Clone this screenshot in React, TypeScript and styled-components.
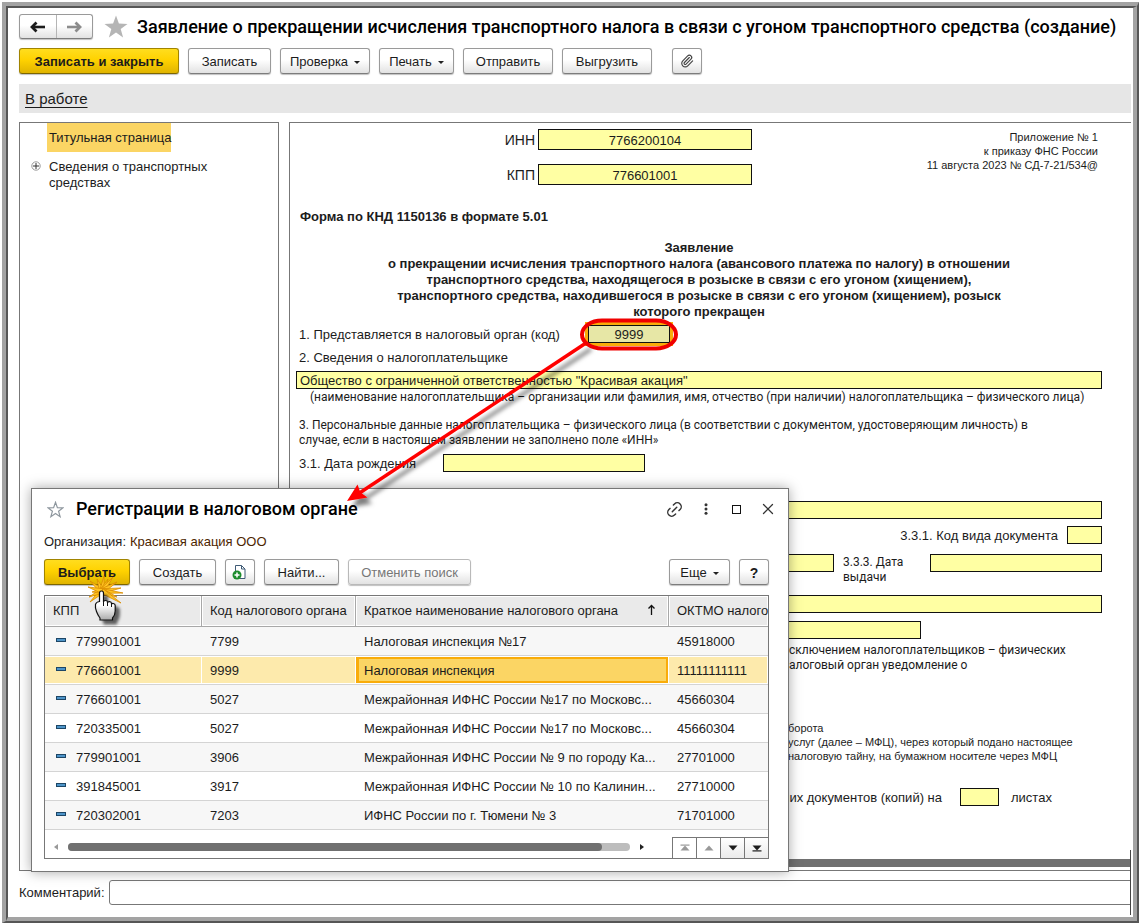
import React from "react";
import styled, { createGlobalStyle, css } from "styled-components";
import { Link2, Paperclip, X } from "lucide-react";

const sans = `"Liberation Sans", Arial, sans-serif`;
const roboto = `Roboto, "Liberation Sans", sans-serif`;

const GlobalStyle = createGlobalStyle`
  *, *::before, *::after { box-sizing: border-box; }
  body { margin: 0; background: #fff; color: #1c1c1c; font: 13px/16px ${sans}; }
  button, input { font: inherit; color: inherit; }
  h1, h2, p, ul { margin: 0; padding: 0; }
`;

/* ---------- outer frame ---------- */

const Page = styled.div`
  position: relative;
  display: flex;
  min-height: 100vh;
  padding: 2px 0 0 2px;
  overflow: hidden;
`;

const FrameOuter = styled.div`
  display: flex;
  flex: 1;
  min-width: 0;
  border: solid;
  border-width: 4px 2px 2px 4px;
  border-color: #a3a3a3 #565656 #565656 #a3a3a3;
`;

const FrameInner = styled.div`
  display: flex;
  flex-direction: column;
  flex: 1;
  min-width: 0;
  padding: 6px 2px 12px 11px;
  border: solid;
  border-width: 2px 4px 4px 2px;
  border-color: #565656 #a3a3a3 #a3a3a3 #565656;
`;

/* ---------- buttons ---------- */

const buttonSkin = css`
  border: 1px solid #9a9a9a;
  border-bottom-color: #7c7c7c;
  border-radius: 3px;
  background: linear-gradient(#fff 0%, #fff 45%, #e2e2e2 100%);
  box-shadow: 0 1px 1px rgba(0, 0, 0, 0.25);
`;

const Button = styled.button<{ $width: number; $primary?: boolean }>`
  display: flex;
  align-items: center;
  justify-content: center;
  gap: 6px;
  flex: none;
  width: ${(p) => p.$width}px;
  height: 26px;
  padding: 2px 0 0;
  white-space: nowrap;
  ${buttonSkin}
  ${(p) =>
    p.$primary &&
    css`
      border-color: #a18400;
      border-bottom-color: #7d6600;
      background: linear-gradient(#ffdd1f 0%, #ffd200 45%, #e0b400 100%);
      font-weight: bold;
    `}
  &:disabled {
    color: #777;
    border-color: #b9b9b9;
  }
`;

const IconButton = styled(Button)`
  padding: 0;
`;

const Caret = styled.span`
  border: 3px solid transparent;
  border-top-color: #222;
  border-bottom: 0;
`;

/* ---------- main window header ---------- */

const TitleRow = styled.header`
  display: flex;
  align-items: center;
  height: 25px;
`;

const NavButtons = styled.div`
  display: flex;
  width: 74px;
  height: 25px;
  margin-right: 11px;
  ${buttonSkin}
`;

const NavButton = styled.button`
  display: flex;
  align-items: center;
  justify-content: center;
  flex: 1;
  padding: 0;
  border: 0;
  background: none;
  color: #1c1c1c;
  & + & {
    border-left: 1px solid #b5b5b5;
    color: #8c8c8c;
  }
`;

const StarButton = styled.button`
  display: flex;
  flex: none;
  padding: 0;
  border: 0;
  background: none;
`;

const PageTitle = styled.h1`
  margin-left: 9px;
  overflow: hidden;
  color: #000;
  font: 500 18px/26px ${roboto};
  white-space: nowrap;
`;

const Toolbar = styled.div`
  display: flex;
  gap: 9px;
  margin-top: 9px;
`;

const ToolbarGap = styled.span<{ $grow?: boolean }>`
  width: 2px;
  flex: ${(p) => (p.$grow ? "1" : "none")};
`;

const StatusBar = styled.div`
  margin-top: 10px;
  padding: 6px;
  background: #e6e6e6;
  font-size: 15px;
  line-height: 17px;
`;

const StatusLink = styled.a`
  color: #1c1c1c;
  text-underline-offset: 3px;
`;

/* ---------- panels ---------- */

const Panels = styled.div`
  display: flex;
  flex: 1;
  gap: 10px;
  margin-top: 9px;
`;

const Sections = styled.nav`
  flex: none;
  width: 260px;
  border: 1px solid #777;
`;

const SectionList = styled.ul`
  list-style: none;
`;

const SectionItem = styled.li`
  display: flex;
  align-items: flex-start;
  padding-left: 11px;
  & + & {
    margin-top: 7px;
  }
`;

const Expander = styled.button`
  display: flex;
  width: 16px;
  padding: 2px 0 0;
  border: 0;
  background: none;
`;

const SectionLink = styled.a<{ $current?: boolean }>`
  max-width: 190px;
  padding: ${(p) => (p.$current ? "7px 0 6px 2px" : "0 2px")};
  background: ${(p) => (p.$current ? "#fbd564" : "none")};
  color: #1c1c1c;
  text-decoration: none;
`;

const Sheet = styled.form`
  display: flex;
  flex-direction: column;
  flex: 1;
  min-width: 0;
  padding: 6px 0 3px 6px;
  border: solid #777;
  border-width: 1px 0 1px 1px;
`;

const SheetBody = styled.div`
  padding-right: 29px;
`;

const Requisites = styled.div`
  display: grid;
  grid-template-columns: 239px 214px 1fr;
  grid-auto-rows: 21px;
  gap: 14px 3px;
  align-items: center;
`;

const RequisiteLabel = styled.label`
  font-size: 14px;
  text-align: right;
`;

const Appendix = styled.p`
  grid-area: 1 / 3 / 3 / 4;
  align-self: start;
  padding: 1px 4px 0 0;
  font-size: 11px;
  line-height: 14px;
  text-align: right;
`;

const Field = styled.input<{ $width?: number; $center?: boolean }>`
  display: block;
  height: 18px;
  min-width: 0;
  padding: 1px 3px 0;
  border: 1px solid #111;
  border-radius: 0;
  outline: 0;
  background: #ffffa3;
  text-align: ${(p) => (p.$center ? "center" : "left")};
  ${(p) => (p.$width ? `flex: none; width: ${p.$width}px;` : "flex: 1; width: 100%;")}
`;

const RequisiteField = styled(Field)`
  height: 21px;
`;

const ActiveField = styled(Field)`
  background: #e7e7a6;
  box-shadow: 0 0 0 3px #f9ac0a;
`;

const FormCode = styled.p`
  margin-top: 24px;
  padding-left: 4px;
  font-weight: bold;
`;

const FormTitle = styled.h2`
  margin-top: 15px;
  font: bold 13px/16px ${sans};
  text-align: center;
`;

const Row = styled.div<{ $top: number; $end?: boolean }>`
  display: flex;
  align-items: flex-start;
  justify-content: ${(p) => (p.$end ? "flex-end" : "flex-start")};
  gap: 9px;
  margin-top: ${(p) => p.$top}px;
`;

const RowLabel = styled.label<{ $width?: number }>`
  flex: none;
  width: ${(p) => (p.$width ? `${p.$width}px` : "auto")};
  padding: 2px 0 0 3px;
`;

const SheetsLabel = styled(RowLabel)`
  padding-right: 9px;
`;

const FieldCaption = styled.p`
  margin-top: 1px;
  padding-left: 14px;
  font: 12px/15px ${roboto};
`;

const Paragraph = styled.p<{ $top: number; $indent?: number; $small?: boolean }>`
  margin-top: ${(p) => p.$top}px;
  padding-left: ${(p) => p.$indent ?? 3}px;
  font: ${(p) => (p.$small ? `11px/14px ${sans}` : `12px/15px ${roboto}`)};
  white-space: nowrap;
`;

const TwoLineLabel = styled.label`
  flex: none;
  width: 78px;
  font: 12px/15px ${roboto};
  padding-top: 1px;
`;

const SheetScroll = styled.div`
  height: 8px;
  margin-top: auto;
  background: #707070;
`;

const CommentRow = styled.div`
  display: flex;
  align-items: center;
  gap: 4px;
  margin-top: 9px;
`;

const CommentField = styled.input`
  flex: 1;
  height: 25px;
  padding: 0 6px;
  border: 1px solid #777;
  border-radius: 3px 0 0 3px;
`;

/* ---------- dialog ---------- */

const Dialog = styled.section`
  position: absolute;
  top: 488px;
  left: 31px;
  width: 758px;
  padding: 0 19px 12px 12px;
  border: 1px solid #777;
  background: #fff;
  box-shadow: 0 0 12px rgba(0, 0, 0, 0.35);
`;

const DialogHeader = styled.header`
  display: flex;
  align-items: center;
  height: 40px;
  padding-left: 3px;
`;

const DialogTitle = styled.h2`
  flex: 1;
  margin-left: 12px;
  color: #000;
  font: 500 18px/24px ${roboto};
`;

const WindowButton = styled.button`
  display: flex;
  align-items: center;
  justify-content: center;
  width: 31px;
  height: 24px;
  padding: 0;
  border: 0;
  background: none;
  color: #333;
  &:last-child {
    margin-right: -14px;
  }
`;

const Organization = styled.p`
  margin-top: 5px;
`;

const OrganizationLink = styled.a`
  margin-left: 4px;
  color: #4d2600;
  text-decoration: none;
`;

const DialogToolbar = styled(Toolbar)`
  margin-top: 9px;
`;

const HelpMark = styled.b`
  font-size: 14px;
`;

const TableBox = styled.div`
  margin-top: 10px;
  border: 1px solid #777;
`;

const Table = styled.table`
  width: 100%;
  table-layout: fixed;
  border-collapse: separate;
  border-spacing: 0;
`;

const cell = css`
  overflow: hidden;
  text-align: left;
  white-space: nowrap;
`;

const HeadCell = styled.th<{ $width?: number }>`
  ${cell}
  width: ${(p) => (p.$width ? `${p.$width}px` : "auto")};
  height: 31px;
  padding: 0 0 0 8px;
  border: solid #a8a8a8;
  border-width: 0 1px 1px 0;
  background: #eaeaea;
  box-shadow: inset 0 0 0 1px #fff;
  font-weight: normal;
  &:last-child {
    border-right: 0;
  }
`;

const SortHead = styled.span`
  display: flex;
  justify-content: space-between;
  padding-right: 12px;
`;

const DataRow = styled.tr<{ $selected?: boolean }>`
  background: ${(p) => (p.$selected ? "#fdeaac" : "#fff")};
  &:nth-child(odd) {
    background: #f7f7f7;
  }
`;

const DataCell = styled.td<{ $selected?: boolean; $active?: boolean }>`
  ${cell}
  height: 29px;
  padding: 2px 8px 0;
  border-bottom: 1px solid #d4d4d4;
  ${(p) =>
    p.$selected &&
    css`
      box-shadow: inset -1px 0 #fff, inset 0 1px #fff, inset 0 -1px #fff;
    `}
  ${(p) =>
    p.$active &&
    css`
      background: #fbd564;
      box-shadow: inset -1px 0 #fff, inset 0 1px #fff, inset 0 -1px #fff, inset 0 0 0 3px #f9ac0a;
    `}
`;

const RecordMark = styled.span`
  display: inline-block;
  width: 10px;
  height: 4px;
  margin: 0 10px 4px 3px;
  border: 1px solid #1d4666;
  background: #4d94c9;
`;

const TableFooter = styled.div`
  display: flex;
  align-items: center;
  height: 28px;
  padding: 6px 0 0 9px;
`;

const ScrollArrow = styled.button<{ $side: "left" | "right" }>`
  width: 4px;
  height: 6px;
  padding: 0;
  border: solid transparent;
  border-width: 3px 0;
  background: none;
  ${(p) =>
    p.$side === "left"
      ? "border-right: 4px solid #999;"
      : "border-left: 4px solid #222;"}
`;

const ScrollTrack = styled.div`
  flex: 1;
  height: 8px;
  margin: 0 10px;
  border-radius: 4px;
  background: #bdbdbd;
`;

const ScrollThumb = styled.div`
  width: 95%;
  height: 8px;
  border-radius: 4px;
  background: #707070;
`;

const Pager = styled.div`
  display: flex;
  align-self: flex-end;
  margin: 0 -1px -1px 28px;
  border: solid #777;
  border-width: 1px 1px 1px 0;
`;

const PagerButton = styled.button`
  display: flex;
  align-items: center;
  justify-content: center;
  width: 24px;
  height: 20px;
  padding: 0;
  border: 0;
  border-left: 1px solid #777;
  background: linear-gradient(#fff, #ebebeb);
  color: #1c1c1c;
  &:disabled {
    background: #fff;
    color: #999;
  }
`;

/* ---------- callouts over the windows ---------- */

const Callout = styled.svg`
  position: absolute;
  top: 310px;
  left: 335px;
  pointer-events: none;
`;

const Pointer = styled.svg`
  position: absolute;
  top: 570px;
  left: 80px;
  pointer-events: none;
`;

const ClipEdge = styled.span`
  position: absolute;
  right: 8px;
  bottom: 8px;
  width: 1px;
  height: 65px;
  background: #444;
`;

const starPoints =
  "12,0.5 14.9,8.6 23.5,8.9 16.7,14.1 19.1,22.5 12,17.6 4.9,22.5 7.3,14.1 0.5,8.9 9.1,8.6";

const NavArrow = ({ flip }: { flip?: boolean }) => (
  <svg width="16" height="12" viewBox="0 0 16 12" aria-hidden>
    <g transform={flip ? "translate(16 0) scale(-1 1)" : undefined} fill="none" stroke="currentColor">
      <path d="M2 6H15" strokeWidth="2.6" />
      <path d="M6.5 1.5L2 6l4.500 4.500" strokeWidth="2.800" />
    </g>
  </svg>
);

const PagerIcon = ({ up, bar }: { up?: boolean; bar?: boolean }) => (
  <svg width="10" height="8" viewBox="0 0 10 8" fill="currentColor" aria-hidden>
    <g transform={up ? undefined : "translate(0 8) scale(1 -1)"}>
      <path d="M5 1.500L9.500 6.500H0.500Z" />
      {bar && <rect x="0.500" y="0.500" width="9" height="1.200" />}
    </g>
  </svg>
);

const columns = [
  { title: "КПП", width: 157 },
  { title: "Код налогового органа", width: 154 },
  { title: "Краткое наименование налогового органа", width: 313, sorted: true },
  { title: "ОКТМО налого" },
];

const records = [
  ["779901001", "7799", "Налоговая инспекция №17", "45918000"],
  ["776601001", "9999", "Налоговая инспекция", "11111111111"],
  ["776601001", "5027", "Межрайонная ИФНС России №17 по Московс...", "45660304"],
  ["720335001", "5027", "Межрайонная ИФНС России №17 по Московс...", "45660304"],
  ["779901001", "3906", "Межрайонная ИФНС России № 9 по городу Ка...", "27701000"],
  ["391845001", "3917", "Межрайонная ИФНС России № 10 по Калинин...", "27710000"],
  ["720302001", "7203", "ИФНС России по г. Тюмени № 3", "71701000"],
];
const selectedIndex = 1;

// Tips of the click burst around its centre
const burstCentre = [102, 591];
const rays = [
  [90, 581], [97, 579], [104, 576], [108, 579], [113, 577], [117, 582],
  [121, 588], [123, 593], [117, 597], [121, 603], [90, 602], [89, 597], [92, 592], [88, 587],
];

function RegistrationsDialog() {
  return (
    <Dialog role="dialog" aria-labelledby="dialog-title">
      <DialogHeader>
        <StarButton type="button" aria-label="Избранное">
          <svg width="17" height="17" viewBox="-1 -1 26 25">
            <polygon points={starPoints} fill="#fff" stroke="#8e979e" strokeWidth="1.800" />
          </svg>
        </StarButton>
        <DialogTitle id="dialog-title">Регистрации в налоговом органе</DialogTitle>
        <WindowButton type="button" aria-label="Ссылка">
          <Link2 size={19} strokeWidth={1.8} style={{ transform: "rotate(-45deg)" }} />
        </WindowButton>
        <WindowButton type="button" aria-label="Меню">
          <svg width="4" height="12" viewBox="0 0 4 12" fill="#333">
            <circle cx="2" cy="1.700" r="1.500" />
            <circle cx="2" cy="6" r="1.500" />
            <circle cx="2" cy="10.300" r="1.500" />
          </svg>
        </WindowButton>
        <WindowButton type="button" aria-label="Развернуть">
          <svg width="9" height="9" viewBox="0 0 9 9">
            <rect x="0.500" y="0.500" width="8" height="8" fill="none" stroke="#111" />
          </svg>
        </WindowButton>
        <WindowButton type="button" aria-label="Закрыть">
          <X size={18} strokeWidth={1.7} />
        </WindowButton>
      </DialogHeader>
      <Organization>
        Организация:
        <OrganizationLink href="#organization">Красивая акация ООО</OrganizationLink>
      </Organization>
      <DialogToolbar>
        <Button type="button" $width={86} $primary>Выбрать</Button>
        <Button type="button" $width={77}>Создать</Button>
        <IconButton type="button" $width={30} aria-label="Создать копированием">
          <svg width="16" height="16" viewBox="0 0 16 16">
            <path d="M3.500 7V1.500h6l3.500 3.500v9.500H8" fill="#fff" stroke="#3f5b76" />
            <path d="M9.500 1.500V5H13" fill="none" stroke="#3f5b76" />
            <circle cx="5" cy="11" r="4.500" fill="#1c8c2c" />
            <path d="M5 8.500v5M2.500 11h5" stroke="#fff" strokeWidth="1.500" />
          </svg>
        </IconButton>
        <Button type="button" $width={75}>Найти...</Button>
        <Button type="button" $width={123} disabled>Отменить поиск</Button>
        <ToolbarGap $grow />
        <Button type="button" $width={61}>Еще <Caret /></Button>
        <Button type="button" $width={30} aria-label="Справка"><HelpMark>?</HelpMark></Button>
      </DialogToolbar>
      <TableBox>
        <Table>
          <thead>
            <tr>
              {columns.map((c) => (
                <HeadCell key={c.title} $width={c.width}>
                  {c.sorted ? (
                    <SortHead>
                      {c.title}
                      <svg width="9" height="14" viewBox="0 0 9 14" aria-hidden>
                        <path d="M4.500 12V3M1.500 5.500l3-3 3 3" fill="none" stroke="#111" strokeWidth="1.300" />
                      </svg>
                    </SortHead>
                  ) : (
                    c.title
                  )}
                </HeadCell>
              ))}
            </tr>
          </thead>
          <tbody>
            {records.map((record, i) => (
              <DataRow key={i} $selected={i === selectedIndex}>
                {record.map((value, j) => (
                  <DataCell key={j} $selected={i === selectedIndex} $active={i === selectedIndex && j === 2}>
                    {j === 0 && <RecordMark />}
                    {value}
                  </DataCell>
                ))}
              </DataRow>
            ))}
          </tbody>
        </Table>
        <TableFooter>
          <ScrollArrow type="button" $side="left" aria-label="Влево" />
          <ScrollTrack>
            <ScrollThumb />
          </ScrollTrack>
          <ScrollArrow type="button" $side="right" aria-label="Вправо" />
          <Pager>
            <PagerButton type="button" disabled aria-label="В начало"><PagerIcon up bar /></PagerButton>
            <PagerButton type="button" disabled aria-label="Вверх"><PagerIcon up /></PagerButton>
            <PagerButton type="button" aria-label="Вниз"><PagerIcon /></PagerButton>
            <PagerButton type="button" aria-label="В конец"><PagerIcon bar /></PagerButton>
          </Pager>
        </TableFooter>
      </TableBox>
    </Dialog>
  );
}

function ApplicationForm() {
  return (
    <Sheet>
      <SheetBody>
        <Requisites>
          <RequisiteLabel htmlFor="inn">ИНН</RequisiteLabel>
          <RequisiteField id="inn" $center defaultValue="7766200104" />
          <RequisiteLabel htmlFor="kpp">КПП</RequisiteLabel>
          <RequisiteField id="kpp" $center defaultValue="776601001" />
          <Appendix>
            Приложение № 1<br />
            к приказу ФНС России<br />
            11 августа 2023 № СД-7-21/534@
          </Appendix>
        </Requisites>
        <FormCode>Форма по КНД 1150136 в формате 5.01</FormCode>
        <FormTitle>
          Заявление<br />
          о прекращении исчисления транспортного налога (авансового платежа по налогу) в отношении<br />
          транспортного средства, находящегося в розыске в связи с его угоном (хищением),<br />
          транспортного средства, находившегося в розыске в связи с его угоном (хищением), розыск<br />
          которого прекращен
        </FormTitle>
        <Row $top={5}>
          <RowLabel htmlFor="authority" $width={283}>1. Представляется в налоговый орган (код)</RowLabel>
          <ActiveField id="authority" $width={82} $center defaultValue="9999" />
        </Row>
        <Row $top={5}>
          <RowLabel htmlFor="taxpayer">2. Сведения о налогоплательщике</RowLabel>
        </Row>
        <Row $top={5}>
          <Field id="taxpayer" defaultValue={'Общество с ограниченной ответственностью "Красивая акация"'} />
        </Row>
        <FieldCaption>
          (наименование налогоплательщика – организации или фамилия, имя, отчество (при наличии) налогоплательщика – физического лица)
        </FieldCaption>
        <Paragraph $top={13}>
          3. Персональные данные налогоплательщика – физического лица (в соответствии с документом, удостоверяющим личность) в<br />
          случае, если в настоящем заявлении не заполнено поле «ИНН»
        </Paragraph>
        <Row $top={6}>
          <RowLabel htmlFor="birth" $width={138}>3.1. Дата рождения</RowLabel>
          <Field id="birth" $width={202} />
        </Row>
        <Row $top={29}>
          <Field aria-label="Место рождения" />
        </Row>
        <Row $top={7} $end>
          <RowLabel htmlFor="doc-kind">3.3.1. Код вида документа</RowLabel>
          <Field id="doc-kind" $width={35} />
        </Row>
        <Row $top={10}>
          <Field aria-label="Серия и номер" />
          <TwoLineLabel htmlFor="doc-date">3.3.3. Дата<br />выдачи</TwoLineLabel>
          <Field id="doc-date" $width={172} />
        </Row>
        <Row $top={10}>
          <Field aria-label="Кем выдан" />
        </Row>
        <Row $top={8}>
          <Field $width={625} aria-label="Код подразделения" />
        </Row>
        <Paragraph $top={4} $indent={486}>
          исключением налогоплательщиков – физических<br />
          налоговый орган уведомление о
        </Paragraph>
        <Paragraph $top={48} $indent={492} $small>
          борота<br />
          услуг (далее – МФЦ), через который подано настоящее<br />
          налоговую тайну, на бумажном носителе через МФЦ
        </Paragraph>
        <Row $top={25} $end>
          <SheetsLabel htmlFor="sheets">их документов (копий) на</SheetsLabel>
          <Field id="sheets" $width={39} />
          <RowLabel as="span" $width={94}>листах</RowLabel>
        </Row>
      </SheetBody>
      <SheetScroll />
    </Sheet>
  );
}

export default function App() {
  return (
    <Page>
      <GlobalStyle />
      <FrameOuter>
        <FrameInner>
          <TitleRow>
            <NavButtons>
              <NavButton type="button" aria-label="Назад"><NavArrow /></NavButton>
              <NavButton type="button" aria-label="Вперед"><NavArrow flip /></NavButton>
            </NavButtons>
            <StarButton type="button" aria-label="Избранное">
              <svg width="24" height="24" viewBox="0 0 24 24">
                <polygon points={starPoints} fill="#b5b5b5" />
              </svg>
            </StarButton>
            <PageTitle>
              Заявление о прекращении исчисления транспортного налога в связи с угоном транспортного средства (создание)
            </PageTitle>
          </TitleRow>
          <Toolbar>
            <Button type="button" $width={160} $primary>Записать и закрыть</Button>
            <Button type="button" $width={83}>Записать</Button>
            <Button type="button" $width={90}>Проверка <Caret /></Button>
            <Button type="button" $width={75}>Печать <Caret /></Button>
            <Button type="button" $width={90}>Отправить</Button>
            <Button type="button" $width={90}>Выгрузить</Button>
            <ToolbarGap />
            <IconButton type="button" $width={30} aria-label="Прикрепить">
              <Paperclip size={14} strokeWidth={2} color="#444" />
            </IconButton>
          </Toolbar>
          <StatusBar>
            <StatusLink href="#status">В работе</StatusLink>
          </StatusBar>
          <Panels>
            <Sections>
              <SectionList>
                <SectionItem>
                  <Expander as="span" />
                  <SectionLink href="#title-page" $current>Титульная страница</SectionLink>
                </SectionItem>
                <SectionItem>
                  <Expander type="button" aria-label="Раскрыть">
                    <svg width="10" height="10" viewBox="0 0 10 10">
                      <circle cx="5" cy="5" r="4.200" fill="#fff" stroke="#999" />
                      <path d="M5 2v6M2 5h6" stroke="#333" />
                    </svg>
                  </Expander>
                  <SectionLink href="#vehicles">Сведения о транспортных средствах</SectionLink>
                </SectionItem>
              </SectionList>
            </Sections>
            <ApplicationForm />
          </Panels>
          <CommentRow>
            <label htmlFor="comment">Комментарий:</label>
            <CommentField id="comment" />
          </CommentRow>
        </FrameInner>
      </FrameOuter>
      <ClipEdge />
      <RegistrationsDialog />
      <Callout width="360" height="210" viewBox="335 310 360 210" aria-hidden>
        <defs>
          <filter id="arrow-shadow" x="-20%" y="-20%" width="140%" height="140%">
            <feDropShadow dx="5" dy="6" stdDeviation="2" floodColor="#000" floodOpacity="0.5" />
          </filter>
        </defs>
        <g filter="url(#arrow-shadow)">
          <path d="M586 343L358 494" stroke="#f00" strokeWidth="3.500" />
          <path d="M347 501L357.500 484.500L360.500 492.500L367.500 497.500Z" fill="#f00" />
        </g>
        <rect x="582" y="320.500" width="94" height="28" rx="20" ry="14" fill="none" stroke="#f00000" strokeWidth="4" />
      </Callout>
      <Pointer width="56" height="64" viewBox="80 570 56 64" aria-hidden>
        <defs>
          <filter id="hand-shadow" x="-30%" y="-30%" width="180%" height="180%">
            <feDropShadow dx="4" dy="4" stdDeviation="1.500" floodColor="#000" floodOpacity="0.6" />
          </filter>
          <linearGradient id="hand-fill" x1="0" y1="0" x2="0" y2="1">
            <stop offset="0.500" stopColor="#fff" />
            <stop offset="1" stopColor="#aaa" />
          </linearGradient>
        </defs>
        <g fill="#ffc423" stroke="#d98c00" strokeWidth="0.800">
          {rays.map(([x, y]) => {
            const [cx, cy] = burstCentre;
            const d = Math.hypot(x - cx, y - cy);
            const nx = (-(y - cy) / d) * 2.4;
            const ny = ((x - cx) / d) * 2.4;
            return <path key={`${x}-${y}`} d={`M${cx + nx} ${cy + ny}L${x} ${y}L${cx - nx} ${cy - ny}Z`} />;
          })}
        </g>
        <path
          filter="url(#hand-shadow)"
          d="M99.500 593q0-2 2-2t2 2v9q0-1.500 2-1.500t2 1.500v1q0-1.500 2-1.300t2 1.800v1q0-1.200 1.800-1t1.900 2v5.500q0 4-2.700 7v2H100v-2q-2-2.500-3.500-6.500t-1-7q.500-2.500 4-3Z"
          fill="url(#hand-fill)"
          stroke="#111"
          strokeWidth="1.200"
        />
        <path d="M103.500 601v5M107.500 602v4M111.500 604v3" stroke="#111" fill="none" />
      </Pointer>
    </Page>
  );
}
